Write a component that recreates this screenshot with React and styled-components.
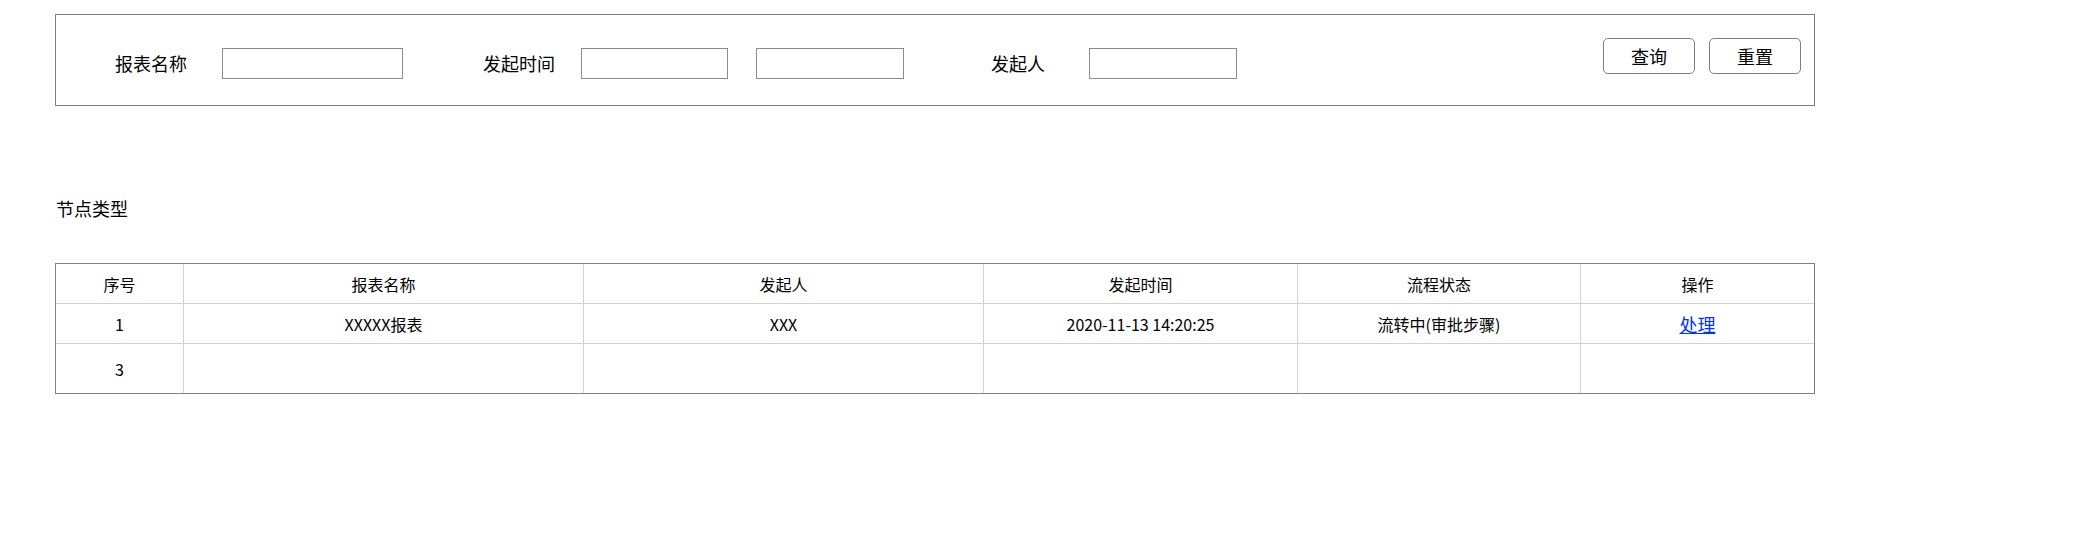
import React from "react";
import styled, { createGlobalStyle } from "styled-components";

const GlobalStyle = createGlobalStyle`
  body {
    margin: 0;
    background: #fff;
    font-family: "Microsoft YaHei", "Noto Sans CJK SC", "Noto Sans", sans-serif;
    color: #000;
  }
`;

const Page = styled.div`
  padding: 14px 0 0 55px;
  width: 1760px;
`;

const FilterBox = styled.div`
  box-sizing: border-box;
  width: 1760px;
  height: 92px;
  border: 1px solid #7f7f7f;
  display: flex;
  align-items: flex-start;
  padding: 33px 13px 0 0;
`;

const Label = styled.span`
  margin-left: ${(p) => p.$ml}px;
  font-size: 18px;
  line-height: 31px;
  white-space: nowrap;
`;

const TextInput = styled.input`
  box-sizing: border-box;
  margin-left: ${(p) => p.$ml}px;
  width: ${(p) => p.$w}px;
  height: 31px;
  border: 1px solid #8c8c8c;
  outline: none;
  padding: 0 6px;
  font-family: inherit;
  font-size: 16px;
`;

const Buttons = styled.div`
  margin-left: auto;
  margin-top: -10px;
  display: flex;
  gap: 14px;
`;

const Button = styled.button`
  box-sizing: border-box;
  width: 92px;
  height: 36px;
  border: 1px solid #7f7f7f;
  border-radius: 5px;
  background: #fff;
  font-family: inherit;
  font-size: 18px;
  color: #000;
  padding: 0;
  cursor: pointer;
`;

const Title = styled.div`
  margin-top: 90px;
  font-size: 18px;
  line-height: 24px;
  padding-left: 1px;
`;

const Table = styled.div`
  box-sizing: border-box;
  margin-top: 43px;
  width: 1760px;
  border: 1px solid #808080;
  display: grid;
  grid-template-columns: 128px 400px 400px 314px 283px 233px;
  grid-template-rows: 40px 40px 49px;
`;

const Cell = styled.div`
  box-sizing: border-box;
  display: flex;
  align-items: center;
  justify-content: center;
  font-size: 16px;
  border-right: ${(p) => (p.$lastCol ? "none" : "1px solid #d2d2d2")};
  border-bottom: ${(p) => (p.$lastRow ? "none" : "1px solid #d2d2d2")};
`;

const Link = styled.a`
  color: #0033ff;
  font-size: 18px;
  text-decoration: underline;
  cursor: pointer;
`;

const rows = [
  ["序号", "报表名称", "发起人", "发起时间", "流程状态", "操作"],
  ["1", "XXXXX报表", "XXX", "2020-11-13 14:20:25", "流转中(审批步骤)", "link"],
  ["3", "", "", "", "", ""],
];

export default function App() {
  return (
    <>
      <GlobalStyle />
      <Page>
        <FilterBox>
          <Label $ml={59}>报表名称</Label>
          <TextInput $ml={35} $w={181} />
          <Label $ml={80}>发起时间</Label>
          <TextInput $ml={26} $w={147} />
          <TextInput $ml={28} $w={148} />
          <Label $ml={87}>发起人</Label>
          <TextInput $ml={44} $w={148} />
          <Buttons>
            <Button>查询</Button>
            <Button>重置</Button>
          </Buttons>
        </FilterBox>

        <Title>节点类型</Title>

        <Table>
          {rows.map((row, r) =>
            row.map((text, c) => (
              <Cell
                key={`${r}-${c}`}
                $lastCol={c === row.length - 1}
                $lastRow={r === rows.length - 1}
              >
                {text === "link" ? <Link>处理</Link> : text}
              </Cell>
            ))
          )}
        </Table>
      </Page>
    </>
  );
}
